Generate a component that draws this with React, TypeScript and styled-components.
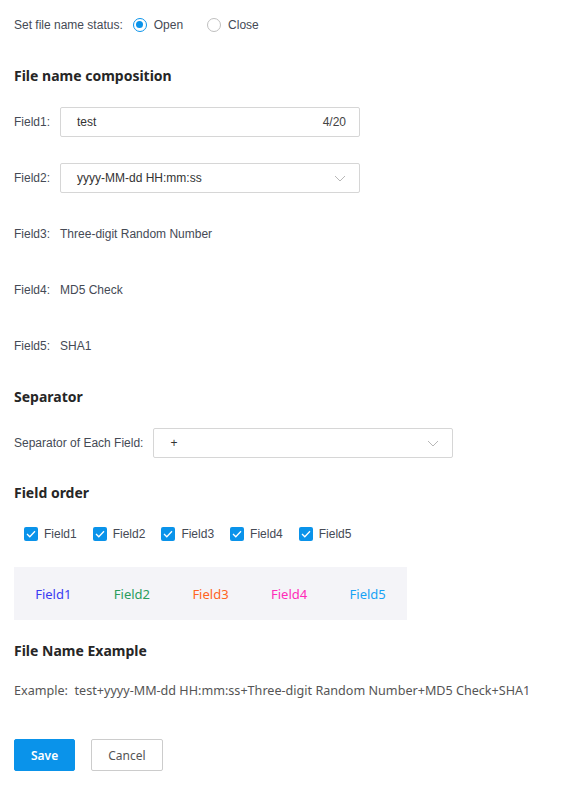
import React, { useState } from "react";
import styled, { createGlobalStyle } from "styled-components";

const GlobalStyle = createGlobalStyle`
    body {
        margin: 0;
        background: #fff;
        font-family: "Liberation Sans", Arial, sans-serif;
        font-size: 12px;
        color: #454a55;
    }
`;

const Page = styled.div`
    padding: 9px 14px 20px;
    display: flex;
    flex-direction: column;
`;

const StatusRow = styled.div`
    height: 31px;
    display: flex;
    align-items: center;
`;

const RadioItem = styled.label`
    display: flex;
    align-items: center;
    gap: 7px;
    margin-right: 24px;
    cursor: pointer;
`;

const RadioCircle = styled.span<{ checked: boolean }>`
    width: 14px;
    height: 14px;
    box-sizing: border-box;
    border-radius: 50%;
    border: 1px solid ${(p) => (p.checked ? "#0a93ea" : "#bfbfbf")};
    display: flex;
    align-items: center;
    justify-content: center;
    &::after {
        content: "";
        width: 7px;
        height: 7px;
        border-radius: 50%;
        background: #0a93ea;
        display: ${(p) => (p.checked ? "block" : "none")};
    }
`;

const Heading = styled.h3<{ top: number }>`
    margin: ${(p) => p.top}px 0 0;
    height: 20px;
    line-height: 20px;
    font-family: "Noto Sans", "Open Sans", sans-serif;
    font-size: 14px;
    font-weight: 700;
    color: #262626;
`;

const Row = styled.div<{ top: number }>`
    margin-top: ${(p) => p.top}px;
    height: 30px;
    display: flex;
    align-items: center;
`;

const Label = styled.span`
    margin-right: 10px;
`;

const Value = styled.span`
    color: #454a55;
`;

const Box = styled.div`
    width: 300px;
    height: 30px;
    box-sizing: border-box;
    border: 1px solid #d6d6d6;
    border-radius: 2px;
    padding: 0 13px 0 16px;
    display: flex;
    align-items: center;
    justify-content: space-between;
    font-size: 12px;
    color: #333;
`;

const Count = styled.span`
    font-size: 12px;
    color: #444;
`;

const Chevron = () => (
    <svg width="12" height="7" viewBox="0 0 12 7" fill="none">
        <path d="M1 1l5 5 5-5" stroke="#b8b8b8" strokeWidth="1" />
    </svg>
);

const CheckRow = styled.div`
    margin-top: 21px;
    height: 20px;
    padding-left: 10px;
    display: flex;
    align-items: center;
    gap: 16px;
`;

const CheckItem = styled.label`
    display: flex;
    align-items: center;
    gap: 6px;
    color: #454a55;
    cursor: pointer;
`;

const CheckBox = styled.span`
    width: 14px;
    height: 14px;
    border-radius: 2px;
    background: #0a93ea;
    display: flex;
    align-items: center;
    justify-content: center;
`;

const OrderBox = styled.div`
    margin-top: 23px;
    width: 393px;
    height: 53px;
    background: #f4f4f8;
    display: grid;
    grid-template-columns: repeat(5, 1fr);
    align-items: center;
`;

const OrderItem = styled.span<{ color: string }>`
    text-align: center;
    font-family: "Noto Sans", "Open Sans", sans-serif;
    font-size: 13px;
    color: ${(p) => p.color};
`;

const Example = styled.div`
    margin-top: 20px;
    height: 20px;
    line-height: 20px;
    font-family: "Noto Sans", "Open Sans", sans-serif;
    font-size: 12.6px;
    color: #555;
`;

const Buttons = styled.div`
    margin-top: 38px;
    display: flex;
    gap: 16px;
`;

const Button = styled.button<{ primary?: boolean }>`
    height: 32px;
    box-sizing: border-box;
    padding: 0 16px;
    border-radius: 2px;
    border: 1px solid ${(p) => (p.primary ? "#0a93ea" : "#cccccc")};
    background: ${(p) => (p.primary ? "#0a93ea" : "#fff")};
    color: ${(p) => (p.primary ? "#fff" : "#555")};
    font-family: "Noto Sans", "Open Sans", sans-serif;
    font-size: 12px;
    font-weight: ${(p) => (p.primary ? 600 : 400)};
    cursor: pointer;
`;

const fields = [
    { name: "Field1", color: "#3b3bf2" },
    { name: "Field2", color: "#2a9d5c" },
    { name: "Field3", color: "#ff6424" },
    { name: "Field4", color: "#ff2bb8" },
    { name: "Field5", color: "#17a2f5" },
];

const App = () => {
    const [open, setOpen] = useState(true);

    return (
        <>
            <GlobalStyle />
            <Page>
                <StatusRow>
                    <Label>Set file name status:</Label>
                    <RadioItem onClick={() => setOpen(true)}>
                        <RadioCircle checked={open} />
                        Open
                    </RadioItem>
                    <RadioItem onClick={() => setOpen(false)}>
                        <RadioCircle checked={!open} />
                        Close
                    </RadioItem>
                </StatusRow>

                <Heading top={26}>File name composition</Heading>
                <Row top={21}>
                    <Label>Field1:</Label>
                    <Box>
                        <span>test</span>
                        <Count>4/20</Count>
                    </Box>
                </Row>
                <Row top={26}>
                    <Label>Field2:</Label>
                    <Box>
                        <span>yyyy-MM-dd HH:mm:ss</span>
                        <Chevron />
                    </Box>
                </Row>
                <Row top={26}>
                    <Label>Field3:</Label>
                    <Value>Three-digit Random Number</Value>
                </Row>
                <Row top={26}>
                    <Label>Field4:</Label>
                    <Value>MD5 Check</Value>
                </Row>
                <Row top={26}>
                    <Label>Field5:</Label>
                    <Value>SHA1</Value>
                </Row>

                <Heading top={26}>Separator</Heading>
                <Row top={21}>
                    <Label>Separator of Each Field:</Label>
                    <Box>
                        <span>+</span>
                        <Chevron />
                    </Box>
                </Row>

                <Heading top={25}>Field order</Heading>
                <CheckRow>
                    {fields.map((f) => (
                        <CheckItem key={f.name}>
                            <CheckBox>
                                <svg width="10" height="8" viewBox="0 0 10 8" fill="none">
                                    <path d="M1 4l2.8 2.8L9 1.2" stroke="#fff" strokeWidth="1.3" />
                                </svg>
                            </CheckBox>
                            {f.name}
                        </CheckItem>
                    ))}
                </CheckRow>
                <OrderBox>
                    {fields.map((f) => (
                        <OrderItem key={f.name} color={f.color}>
                            {f.name}
                        </OrderItem>
                    ))}
                </OrderBox>

                <Heading top={21}>File Name Example</Heading>
                <Example>
                    Example:&nbsp;&nbsp;test+yyyy-MM-dd HH:mm:ss+Three-digit Random Number+MD5 Check+SHA1
                </Example>

                <Buttons>
                    <Button primary>Save</Button>
                    <Button>Cancel</Button>
                </Buttons>
            </Page>
        </>
    );
};

export default App;
